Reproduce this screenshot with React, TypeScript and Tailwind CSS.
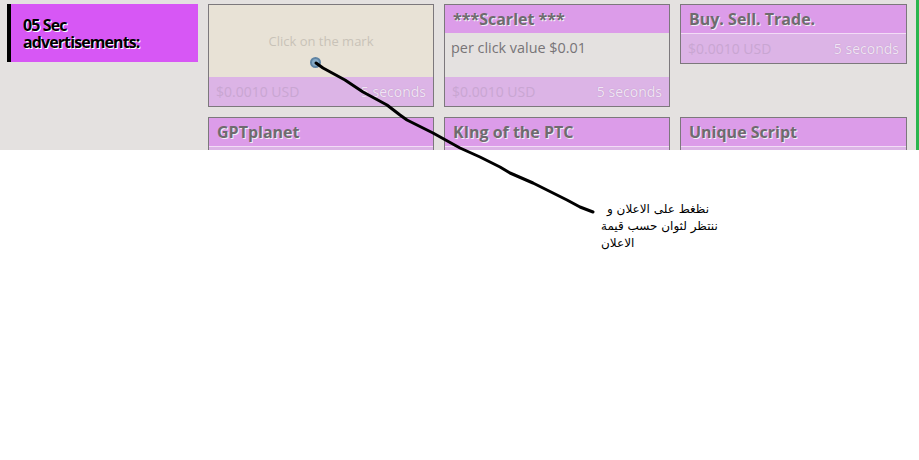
import React from "react";

const font = { fontFamily: '"Open Sans", "Noto Sans", sans-serif' };

function Footer() {
  return (
    <div className="flex h-[29px] items-center justify-between bg-[#dcb4e6] px-[7px] text-[14px]">
      <span className="text-[#c9a6d2]">$0.0010 USD</span>
      <span className="text-[#f1e4f5] [text-shadow:0_0_1px_#b08ab8]">5 seconds</span>
    </div>
  );
}

function Title({ children }: { children: React.ReactNode }) {
  return (
    <div className="flex h-[28px] items-center bg-[#dc9ce9] px-[8px] text-[16px] font-bold text-[#6e6b6e] [text-shadow:1px_1px_0_#f4eef4]">
      {children}
    </div>
  );
}

export default function App() {
  return (
    <div className="relative h-[460px] w-[919px] bg-white" style={font}>
      <div className="flex h-[150px] overflow-hidden bg-[#e4e1e0]">
        <div className="ml-[7px] mt-[4px] flex h-[58px] w-[191px] border-l-[4px] border-black bg-[#d757f5] pl-[12px] pt-[13px]">
          <div className="text-[16px] font-bold leading-[17px] tracking-[-0.9px] text-black [text-shadow:1px_1px_0_#ffffff]">
            <div>05 Sec</div>
            <div>advertisements:</div>
          </div>
        </div>
        <div className="ml-[10px] mt-[4px] grid grid-cols-[226px_226px_227px] items-start gap-x-[10px] gap-y-[10px]">
          <div className="border border-[#7c787c]">
            <div className="relative flex h-[72px] justify-center bg-[#e8e2d6] pt-[27px] text-[13px] text-[#c8c2b8]">
              Click on the mark
              <span className="absolute left-[101px] top-[52px] h-[11px] w-[11px] rounded-full border-[2px] border-[#5f84a4] bg-[#86aac6]" />
            </div>
            <Footer />
          </div>
          <div className="border border-[#7c787c]">
            <Title>***Scarlet ***</Title>
            <div className="h-[44px] bg-[#e4e1e0] px-[6px] pt-[4px] text-[14.4px] text-[#777477]">
              per click value $0.01
            </div>
            <Footer />
          </div>
          <div className="border border-[#7c787c]">
            <Title>Buy. Sell. Trade.</Title>
            <div className="h-px bg-[#f2dcf6]" />
            <Footer />
          </div>
          <div className="border border-[#7c787c]">
            <Title>GPTplanet</Title>
            <div className="h-px bg-[#f2dcf6]" />
            <Footer />
          </div>
          <div className="border border-[#7c787c]">
            <Title>KIng of the PTC</Title>
            <div className="h-px bg-[#f2dcf6]" />
            <Footer />
          </div>
          <div className="border border-[#7c787c]">
            <Title>Unique Script</Title>
            <div className="h-px bg-[#f2dcf6]" />
            <Footer />
          </div>
        </div>
        <div className="ml-auto w-[3px] bg-[#2ab64e]" />
      </div>

      <svg className="pointer-events-none absolute left-0 top-0" width="919" height="460">
        <path
          d="M316 63 L323 68 L345 80 L363 92 L387 105 L400 115 L407 120 L433 133 L460 148 L480 157 L500 167 L510 173 L533 183 L547 190 L567 200 L580 207 L593 212"
          fill="none"
          stroke="#000"
          strokeWidth="3"
          strokeLinecap="round"
          strokeLinejoin="round"
        />
      </svg>

      <div
        className="absolute left-[601px] top-[201px] w-[124px] text-[12px] leading-[17px] text-black"
        style={{ fontFamily: '"DejaVu Sans", "Liberation Sans", sans-serif' }}
      >
        <div className="pl-[6px] tracking-[0.5px]" dir="rtl" style={{ textAlign: "left" }}>نظغط على الاعلان و</div>
        <div dir="rtl" style={{ textAlign: "left" }}>ننتظر لثوان حسب قيمة</div>
        <div dir="rtl" style={{ textAlign: "left" }}>الاعلان</div>
      </div>
    </div>
  );
}
